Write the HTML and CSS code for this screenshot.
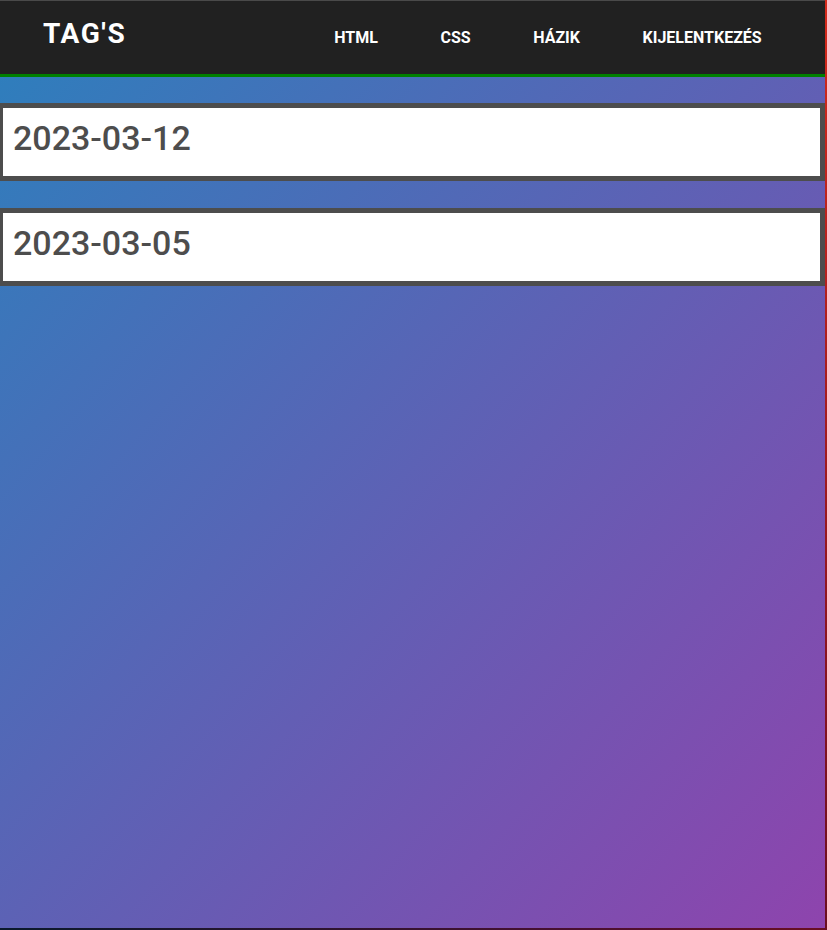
FILE: index.html
```html
<!DOCTYPE html>
<html lang="hu">
<head>
<meta charset="utf-8">
<title>TAG'S</title>
<link rel="stylesheet" href="styles.css">
</head>
<body>
<div class="frame">
  <div class="page">
    <header class="topbar">
      <div class="logo">TAG'S</div>
      <nav class="nav">
        <a href="#">HTML</a>
        <a href="#">CSS</a>
        <a href="#">HÁZIK</a>
        <a href="#">KIJELENTKEZÉS</a>
      </nav>
    </header>
    <main class="list">
      <div class="card">2023-03-12</div>
      <div class="card">2023-03-05</div>
    </main>
  </div>
</div>
</body>
</html>
```

FILE: styles.css
```css
html {
  background: linear-gradient(to right, #0a1a2c, #4a1030 70%, #6a0f22);
  height: 930px;
}
body {
  margin: 0;
  font-family: Roboto, "Liberation Sans", sans-serif;
}
.frame {
  display: flex;
  width: 827px;
  height: 928px;
  background: linear-gradient(to bottom, #d42a1c, #8a1420 70%, #6a0e20);
}
.page {
  width: 825px;
  height: 928px;
  background: linear-gradient(to bottom right, #2b80bd, #8e44ad);
}
.topbar {
  box-sizing: border-box;
  height: 77px;
  background: #212121;
  border-top: 1px solid #4a4a4a;
  border-bottom: 3px solid #008000;
  display: flex;
  align-items: center;
  justify-content: space-between;
  padding: 0 32px 0 43px;
}
.logo {
  color: #fff;
  font-weight: 700;
  font-size: 28px;
  letter-spacing: 1.6px;
  margin-top: -8px;
}
.nav {
  display: flex;
}
.nav a {
  color: #fff;
  text-decoration: none;
  font-weight: 700;
  font-size: 16px;
  padding: 0 31.3px;
}
.list {
  display: flex;
  flex-direction: column;
  gap: 27px;
  padding-top: 26px;
}
.card {
  background: #fff;
  border: 5px solid #4d4d4d;
  border-left-width: 3px;
  color: #4d4d4d;
  font-size: 34px;
  font-weight: 500;
  line-height: 40px;
  padding: 10px 10px 18px 10px;
}
```
